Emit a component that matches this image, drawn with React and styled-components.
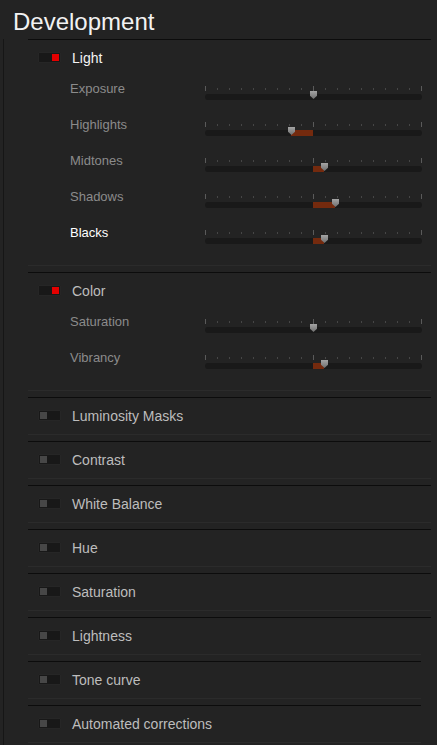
import React from 'react';
import styled, { createGlobalStyle } from 'styled-components';

const GlobalStyle = createGlobalStyle`
  html, body {
    margin: 0;
    padding: 0;
    background: #232323;
  }
  body {
    font-family: "Liberation Sans", Arial, sans-serif;
    -webkit-font-smoothing: antialiased;
  }
`;

// slider values are pixel offsets on a 216px track, centre = 108
const sections = [
  {
    name: 'Light',
    on: true,
    bright: true,
    sliders: [
      { label: 'Exposure', value: 108 },
      { label: 'Highlights', value: 86 },
      { label: 'Midtones', value: 119 },
      { label: 'Shadows', value: 130 },
      { label: 'Blacks', value: 119, active: true },
    ],
  },
  {
    name: 'Color',
    on: true,
    sliders: [
      { label: 'Saturation', value: 108 },
      { label: 'Vibrancy', value: 119 },
    ],
  },
  { name: 'Luminosity Masks' },
  { name: 'Contrast' },
  { name: 'White Balance' },
  { name: 'Hue' },
  { name: 'Saturation' },
  { name: 'Lightness', shortBottom: true },
  { name: 'Tone curve', shortTop: true, shortBottom: true },
  { name: 'Automated corrections', shortTop: true, shortBottom: true },
];

const TRACK = 216;
const CENTER = 108;

const Page = styled.div`
  width: 437px;
  height: 745px;
  overflow: hidden;
  box-sizing: border-box;
  background: #232323;
`;

const Title = styled.h1`
  margin: 0;
  height: 39px;
  box-sizing: border-box;
  padding: 4px 0 0 13px;
  font-size: 24px;
  line-height: 36px;
  font-weight: 400;
  color: #f2f2f2;
`;

const Panel = styled.div`
  margin-left: 3px;
  border-left: 1px solid #161616;
  padding: 0 6px 0 24px;
  display: flex;
  flex-direction: column;
`;

const Section = styled.section`
  display: flex;
  flex-direction: column;
`;

const Rule = styled.div`
  height: 1px;
  background: ${({ $dark }) => ($dark ? '#0c0c0c' : '#2b2b2b')};
  margin-right: ${({ $short }) => ($short ? '10px' : '0')};
`;

const Gap = styled.div`
  height: 6px;
`;

const Header = styled.div`
  height: 36px;
  display: flex;
  align-items: center;
  padding-left: 10px;
  gap: 11px;
`;

const Toggle = styled.div`
  width: 19px;
  height: 7px;
  padding: 1px;
  border: 1px solid #262626;
  border-radius: 1px;
  background: #181818;
  display: flex;
  justify-content: ${({ $on }) => ($on ? 'flex-end' : 'flex-start')};
  margin-top: -1px;
`;

const Knob = styled.div`
  width: 7px;
  height: 7px;
  background: ${({ $on }) => ($on ? '#e40000' : '#474747')};
`;

const SectionName = styled.span`
  font-size: 14px;
  color: ${({ $bright }) => ($bright ? '#f4f4f4' : '#bdbdbd')};
`;

const Body = styled.div`
  display: flex;
  flex-direction: column;
  padding-bottom: 9px;
`;

const Row = styled.div`
  height: 36px;
  display: flex;
  align-items: flex-start;
  padding-left: 42px;
`;

const Label = styled.span`
  width: 135px;
  padding-top: 5px;
  font-size: 13px;
  line-height: 16px;
  color: ${({ $active }) => ($active ? '#ffffff' : '#8b8b8b')};
`;

const SliderWrap = styled.div`
  position: relative;
  width: ${TRACK + 1}px;
  margin-top: 9px;
  display: flex;
  flex-direction: column;
`;

const Ticks = styled.div`
  height: 6px;
  display: flex;
  justify-content: space-between;
  align-items: flex-end;
`;

const Tick = styled.div`
  width: 1px;
  height: ${({ $major }) => ($major ? '5px' : '2px')};
  margin-bottom: ${({ $major }) => ($major ? '0' : '1px')};
  background: ${({ $major }) => ($major ? '#5a5a5a' : '#464646')};
`;

const Track = styled.div`
  position: relative;
  margin-top: 3px;
  height: 6px;
  border-radius: 3px;
  background: #191919;
`;

const Fill = styled.div`
  position: absolute;
  top: 0;
  bottom: 0;
  background: #742a0e;
`;

const Thumb = styled.div`
  position: absolute;
  top: 6px;
  width: 7px;
  height: 8px;
  margin-left: -3px;
  background: linear-gradient(#a4a4a4, #6f6f6f);
  clip-path: polygon(0 0, 100% 0, 100% 60%, 50% 100%, 0 60%);
`;

const Slider = ({ value }) => {
  const from = Math.min(value, CENTER);
  const to = Math.max(value, CENTER);
  return (
    <SliderWrap>
      <Ticks>
        {Array.from({ length: 19 }, (_, i) => (
          <Tick key={i} $major={i % 9 === 0} />
        ))}
      </Ticks>
      <Track>
        {to > from && <Fill style={{ left: from, width: to - from }} />}
      </Track>
      <Thumb style={{ left: value }} />
    </SliderWrap>
  );
};

export default function App() {
  return (
    <Page>
      <GlobalStyle />
      <Title>Development</Title>
      <Panel>
        {sections.map((s) => (
          <Section key={s.name}>
            <Rule $dark $short={s.shortTop} />
            <Header>
              <Toggle $on={s.on}>
                <Knob $on={s.on} />
              </Toggle>
              <SectionName $bright={s.bright}>{s.name}</SectionName>
            </Header>
            {s.sliders && (
              <Body>
                {s.sliders.map((sl) => (
                  <Row key={sl.label}>
                    <Label $active={sl.active}>{sl.label}</Label>
                    <Slider value={sl.value} />
                  </Row>
                ))}
              </Body>
            )}
            <Rule $short={s.shortBottom} />
            <Gap />
          </Section>
        ))}
      </Panel>
    </Page>
  );
}
